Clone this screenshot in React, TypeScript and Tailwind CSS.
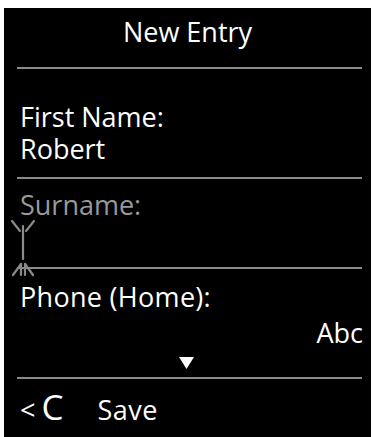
import React from 'react';

const font = { fontFamily: '"Open Sans", "Noto Sans", sans-serif' };

function Rule({ className = '' }: { className?: string }) {
  return <div className={`ml-[13px] mr-[9px] h-[2px] bg-[#8a8a8a] ${className}`} />;
}

// I-beam style cursor drawn beside the empty Surname field
function Cursor() {
  return (
    <svg
      className="absolute left-[3px] top-[203px]"
      width="32"
      height="66"
      viewBox="0 0 32 66"
      fill="none"
      stroke="#8a8a8a"
      strokeWidth="2.2"
      strokeLinecap="round"
    >
      <path d="M5 10 L13 20" />
      <path d="M27 10 L19 20" />
      <path d="M16 15 L16 48" />
      <path d="M14 53 L6 64" />
      <path d="M18 53 L26 64" />
      <path d="M14 53 L14 64" />
      <path d="M18 53 L18 64" />
    </svg>
  );
}

export default function App() {
  return (
    <div className="w-[373px] h-[437px] bg-white pt-[8px] pl-[4px] pr-[2px]" style={font}>
      <div className="relative h-[429px] bg-black text-white text-[27px] leading-[32px]">
        <div className="pt-[8px] text-center">New Entry</div>
        <Rule className="mt-[19px]" />

        <div className="mt-[32px] pl-[16px]">First Name:</div>
        <div className="pl-[16px]">Robert</div>
        <Rule className="mt-[12px]" />

        <div className="mt-[10px] pl-[16px] text-[#999999]">Surname:</div>
        <Cursor />
        <Rule className="mt-[46px]" />

        <div className="mt-[12px] pl-[16px] tracking-[0.3px]">Phone (Home):</div>
        <div className="mt-[4px] pr-[8px] text-right">Abc</div>
        <div className="mt-[8px] flex justify-center pr-[2px]">
          <svg width="15" height="12" viewBox="0 0 15 12">
            <path d="M0 0 H15 L7.5 12 Z" fill="#fff" />
          </svg>
        </div>
        <Rule className="mt-[8px]" />

        <div className="mt-[12px] flex items-baseline pl-[16px]">
          <span className="text-[27px]">&lt;</span>
          <span className="ml-[6px] text-[35px]">C</span>
          <span className="ml-[34px] tracking-[0.5px]">Save</span>
        </div>
      </div>
    </div>
  );
}
